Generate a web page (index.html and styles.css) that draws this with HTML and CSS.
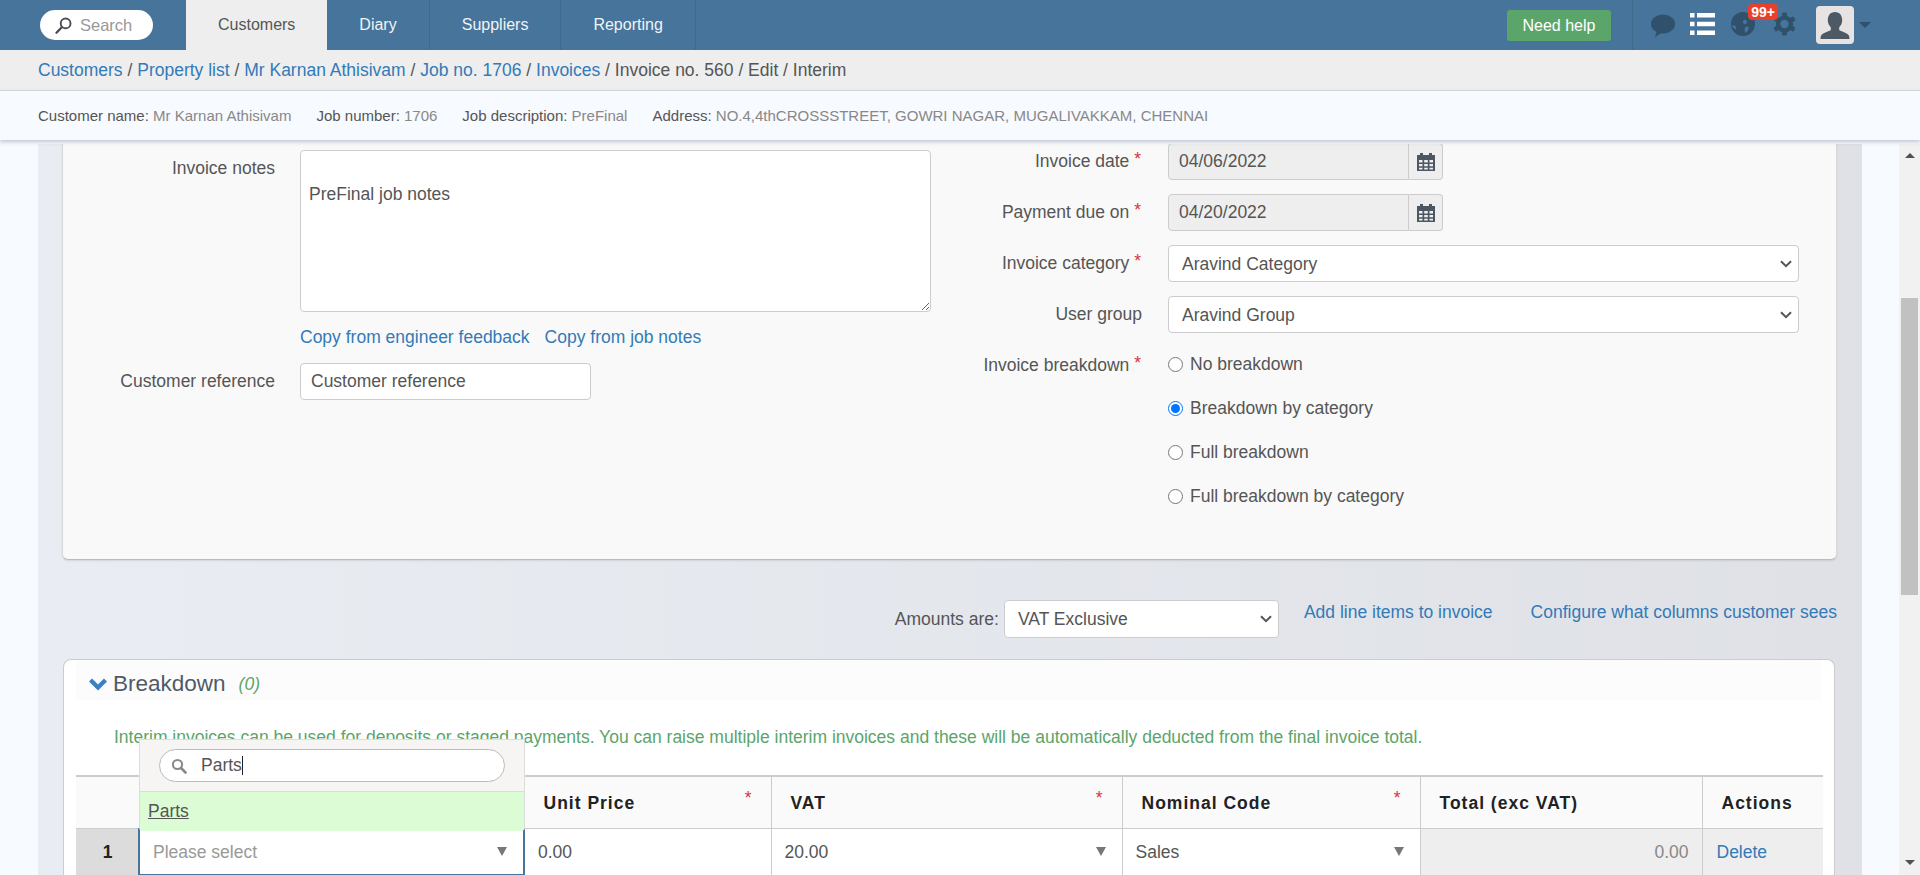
FILE: index.html
```html
<!DOCTYPE html>
<html lang="en">
<head>
  <meta charset="UTF-8">
  <meta name="viewport" content="width=device-width, initial-scale=1.0">
  <title>Edit Invoice</title>
  <link rel="stylesheet" href="styles.css">
</head>
<body>
  <header class="topbar">
    <div class="search-pill">
      <svg class="search-pill-icon" viewBox="0 0 16 16" width="17" height="17">
        <circle cx="10" cy="6" r="4.600" fill="none" stroke="#4a4f55" stroke-width="1.800"/>
        <path d="M6.600 9.400 1.400 14.800" stroke="#4a4f55" stroke-width="2.200" stroke-linecap="round"/>
      </svg>
      <span>Search</span>
    </div>
    <nav class="tabs">
      <a class="tab tab-active" href="#">Customers</a>
      <a class="tab" href="#">Diary</a>
      <a class="tab" href="#">Suppliers</a>
      <a class="tab" href="#">Reporting</a>
    </nav>
    <div class="topbar-right">
      <a class="help-btn" href="#">Need help</a>
      <span class="topbar-sep"></span>
      <svg class="icon-chat" viewBox="0 0 24 23" width="24" height="23">
        <ellipse cx="12" cy="10" rx="12" ry="9.600" fill="#2f516b"/>
        <path d="M6 16 4 23 12 18Z" fill="#2f516b"/>
      </svg>
      <svg class="icon-list" viewBox="0 0 25 22" width="25" height="22">
        <path fill="#fff" d="M0 0h4.500v4.500H0zM7 0h18v4.500H7zM0 8.800h4.500v4.500H0zM7 8.800h18v4.500H7zM0 17.500h4.500V22H0zM7 17.500h18V22H7z"/>
      </svg>
      <span class="globe-wrap">
        <svg viewBox="0 0 24 24" width="24" height="24">
          <circle cx="12" cy="12" r="12" fill="#2f516b"/>
          <path fill="#46749a" d="M12 8.500l2.500-1 1.500 1.500-.5 2.500-1.500 1-2-1.500zM14.500 14.500l3.500.5-1 3.500-2.500 2.500-1-3zM1 13l3 .5 1.500 2.500-1 1.500-2.500-2z"/>
        </svg>
        <span class="badge">99+</span>
      </span>
      <svg class="icon-gear" viewBox="0 0 24 24" width="23" height="24">
        <circle cx="12" cy="12" r="6.700" fill="none" stroke="#2f516b" stroke-width="4.600"/>
        <g fill="#2f516b">
          <rect x="9.500" y="0" width="5" height="5" rx="1"/>
          <rect x="9.500" y="19" width="5" height="5" rx="1"/>
          <rect x="9.500" y="0" width="5" height="5" rx="1" transform="rotate(60 12 12)"/>
          <rect x="9.500" y="19" width="5" height="5" rx="1" transform="rotate(60 12 12)"/>
          <rect x="9.500" y="0" width="5" height="5" rx="1" transform="rotate(120 12 12)"/>
          <rect x="9.500" y="19" width="5" height="5" rx="1" transform="rotate(120 12 12)"/>
        </g>
      </svg>
      <span class="avatar">
        <svg viewBox="0 0 38 38" width="38" height="38">
          <path fill="#4d5965" d="M19 6c-4.600 0-7.200 3.600-7.200 8 0 3 1.200 5.600 3 7.300v2.700c-1 1.300-8.600 2.800-9.800 5.800-.4 1-.5 2.200-.5 3.200h29c0-1-.1-2.200-.5-3.200-1.200-3-8.800-4.500-9.800-5.800v-2.700c1.800-1.700 3-4.300 3-7.300 0-4.400-2.600-8-7.200-8z"/>
        </svg>
      </span>
      <span class="caret"></span>
    </div>
  </header>

  <div class="breadcrumbs">
    <a href="#">Customers</a> / <a href="#">Property list</a> / <a href="#">Mr Karnan Athisivam</a> / <a href="#">Job no. 1706</a> / <a href="#">Invoices</a> / Invoice no. 560 / Edit / Interim
  </div>

  <div class="job-info">
    <span class="job-item">Customer name: <em>Mr Karnan Athisivam</em></span>
    <span class="job-item">Job number: <em>1706</em></span>
    <span class="job-item">Job description: <em>PreFinal</em></span>
    <span class="job-item">Address: <em>NO.4,4thCROSSSTREET, GOWRI NAGAR, MUGALIVAKKAM, CHENNAI</em></span>
  </div>

  <div class="workspace">
    <main class="panel">
      <section class="invoice-card">
        <div class="form-col form-col-left">
          <div class="form-row">
            <label class="form-label label-top">Invoice notes</label>
            <div>
              <textarea class="notes" spellcheck="false">

PreFinal job notes</textarea>
              <div class="copy-links">
                <a href="#">Copy from engineer feedback</a>
                <a href="#">Copy from job notes</a>
              </div>
            </div>
          </div>
          <div class="form-row">
            <label class="form-label">Customer reference</label>
            <input class="text-input ref-input" type="text" value="Customer reference">
          </div>
        </div>

        <div class="form-col form-col-right">
          <div class="form-row">
            <label class="form-label">Invoice date <span class="req">*</span></label>
            <div class="date-group">
              <input class="text-input date-input" type="text" value="04/06/2022" readonly>
              <span class="date-addon">
                <svg viewBox="0 0 18 18" width="18" height="18"><use href="#cal"/></svg>
              </span>
            </div>
          </div>
          <div class="form-row">
            <label class="form-label">Payment due on <span class="req">*</span></label>
            <div class="date-group">
              <input class="text-input date-input" type="text" value="04/20/2022" readonly>
              <span class="date-addon">
                <svg viewBox="0 0 18 18" width="18" height="18"><use href="#cal"/></svg>
              </span>
            </div>
          </div>
          <div class="form-row">
            <label class="form-label">Invoice category <span class="req">*</span></label>
            <select class="select-input wide"><option>Aravind Category</option></select>
          </div>
          <div class="form-row">
            <label class="form-label">User group</label>
            <select class="select-input wide"><option>Aravind Group</option></select>
          </div>
          <div class="form-row radio-row">
            <label class="form-label">Invoice breakdown <span class="req">*</span></label>
            <div class="radio-list">
              <label class="radio"><input type="radio" name="breakdown"> No breakdown</label>
              <label class="radio"><input type="radio" name="breakdown" checked> Breakdown by category</label>
              <label class="radio"><input type="radio" name="breakdown"> Full breakdown</label>
              <label class="radio"><input type="radio" name="breakdown"> Full breakdown by category</label>
            </div>
          </div>
        </div>
      </section>

      <div class="amounts-bar">
        <label class="amounts-label">Amounts are:</label>
        <select class="select-input amounts-select"><option>VAT Exclusive</option></select>
        <a class="amounts-link" href="#">Add line items to invoice</a>
        <a class="amounts-link" href="#">Configure what columns customer sees</a>
      </div>

      <section class="breakdown-card">
        <div class="breakdown-head">
          <svg viewBox="0 0 18 14" width="18" height="14">
            <path d="M1.500 3 9 10.500 16.500 3" fill="none" stroke="#3a80c4" stroke-width="4.400"/>
          </svg>
          <h2>Breakdown</h2>
          <span class="count">(0)</span>
        </div>
        <p class="interim-note">Interim invoices can be used for deposits or staged payments. You can raise multiple interim invoices and these will be automatically deducted from the final invoice total.</p>

        <table class="lines">
          <colgroup>
            <col class="col-num"><col class="col-item"><col class="col-price"><col class="col-vat"><col class="col-code"><col class="col-total"><col class="col-actions">
          </colgroup>
          <thead>
            <tr>
              <th></th>
              <th></th>
              <th>Unit Price<span class="th-req">*</span></th>
              <th>VAT<span class="th-req">*</span></th>
              <th>Nominal Code<span class="th-req">*</span></th>
              <th>Total (exc VAT)</th>
              <th>Actions</th>
            </tr>
          </thead>
          <tbody>
            <tr>
              <td class="cell-num">1</td>
              <td class="cell-item cell-selected">
                <span class="placeholder">Please select</span><span class="cell-arrow"></span>
                <div class="dropdown">
                  <div class="dropdown-search">
                    <div class="dropdown-field">
                      <svg viewBox="0 0 16 16" width="16" height="16">
                        <circle cx="6.500" cy="6.500" r="4.600" fill="none" stroke="#888" stroke-width="2"/>
                        <path d="M10 10l4.500 4.500" stroke="#888" stroke-width="2.600" stroke-linecap="round"/>
                      </svg>
                      <span>Parts</span><span class="text-cursor"></span>
                    </div>
                  </div>
                  <div class="dropdown-option"><a href="#">Parts</a></div>
                </div>
              </td>
              <td class="cell-text">0.00</td>
              <td class="cell-text cell-pick">20.00<span class="cell-arrow"></span></td>
              <td class="cell-text cell-pick">Sales<span class="cell-arrow"></span></td>
              <td class="cell-total">0.00</td>
              <td class="cell-action"><a href="#">Delete</a></td>
            </tr>
          </tbody>
        </table>
      </section>
    </main>

    <div class="scrollbar">
      <span class="scroll-up"></span>
      <span class="scroll-thumb"></span>
      <span class="scroll-down"></span>
    </div>
  </div>

  <svg class="svg-defs" width="0" height="0">
    <symbol id="cal" viewBox="0 0 18 18">
      <path fill="#4d5763" fill-rule="evenodd" d="M0 2h3V0h3v2h6V0h3v2h3v16H0zM2 7v2.500h3.500V7zm5.200 0v2.500h3.600V7zm5.300 0v2.500H16V7zM2 11v2.200h3.500V11zm5.200 0v2.200h3.600V11zm5.300 0v2.200H16V11zM2 14.700V16.500h3.500v-1.800zm5.200 0v1.800h3.600v-1.800zm5.300 0v1.800H16v-1.800z"/>
    </symbol>
  </svg>
</body>
</html>
```

FILE: styles.css
```css
* {
  box-sizing: border-box;
}

html, body {
  height: 100%;
}

body {
  margin: 0;
  height: 875px;
  overflow: hidden;
  display: flex;
  flex-direction: column;
  background-color: #f7faff;
  font-family: "Liberation Sans", Arial, sans-serif;
  font-size: 17.5px;
  color: #555;
}

a {
  color: #337ab7;
  text-decoration: none;
}

.svg-defs {
  position: absolute;
}

/* top bar */
.topbar {
  flex: none;
  height: 50px;
  display: flex;
  align-items: center;
  padding-left: 40px;
  background-color: #46749a;
  font-size: 16px;
}

.search-pill {
  width: 113px;
  height: 30px;
  display: flex;
  align-items: center;
  gap: 8px;
  padding-left: 15px;
  border-radius: 15px;
  background-color: #fff;
  color: #999;
  font-size: 16.5px;
}

.tabs {
  display: flex;
  height: 50px;
  margin-left: 33px;
}

.tab {
  display: flex;
  align-items: center;
  padding: 0 32px;
  border-right: 1px solid #3f6a8c;
  color: #fff;
  opacity: 0.92;
}

.tab-active {
  padding: 0 32px;
  border-right: none;
  background-color: #eee;
  color: #555;
  opacity: 1;
}

.topbar-right {
  margin-left: auto;
  height: 50px;
  display: flex;
  align-items: center;
  padding-right: 49px;
}

.help-btn {
  width: 104px;
  height: 31px;
  line-height: 31px;
  text-align: center;
  border-radius: 3px;
  background-color: #5ca56a;
  color: #fff;
}

.topbar-sep {
  width: 1px;
  height: 50px;
  margin-left: 21px;
  background-color: #3f6a8c;
}

.icon-chat {
  margin-left: 18px;
}

.icon-list {
  margin-left: 15px;
  margin-bottom: 2px;
}

.globe-wrap {
  position: relative;
  display: flex;
  margin-left: 16px;
  margin-bottom: 2px;
}

.badge {
  position: absolute;
  left: 17px;
  top: -8px;
  width: 30px;
  height: 16px;
  line-height: 16px;
  text-align: center;
  border-radius: 4px;
  background-color: #e8402a;
  color: #fff;
  font-size: 14px;
  font-weight: bold;
}

.icon-gear {
  margin-left: 18px;
  margin-bottom: 2px;
}

.avatar {
  display: flex;
  width: 38px;
  height: 38px;
  margin-left: 20px;
  border-radius: 4px;
  background-color: #e6e3e2;
}

.caret {
  width: 0;
  height: 0;
  margin-left: 5px;
  border-left: 6px solid transparent;
  border-right: 6px solid transparent;
  border-top: 6px solid #2f516b;
}

/* breadcrumb and job strip */
.breadcrumbs {
  flex: none;
  height: 41px;
  padding: 10px 0 0 38px;
  border-bottom: 1px solid #d5d8da;
  background-color: #eee;
  font-size: 17.5px;
  line-height: 20px;
}

.job-info {
  position: relative;
  z-index: 2;
  flex: none;
  height: 49px;
  display: flex;
  align-items: center;
  gap: 25px;
  padding-left: 38px;
  background-color: #f7faff;
  box-shadow: 0 2px 4px rgba(90, 100, 120, 0.35);
  font-size: 15px;
}

.job-item em {
  font-style: normal;
  color: #888;
}

/* scrolled area */
.workspace {
  flex: 1;
  min-height: 0;
  display: flex;
  margin-top: 4px;
  overflow: hidden;
}

.panel {
  width: 1824px;
  margin: 0 37px 0 38px;
  padding: 0 25px 0 24px;
  background: linear-gradient(90deg, #e9edf3, #dfe1e6);
}

.scrollbar {
  width: 21px;
  display: flex;
  flex-direction: column;
  align-items: center;
  background-color: #f1f1f1;
}

.scroll-up,
.scroll-down {
  width: 0;
  height: 0;
  border-left: 5px solid transparent;
  border-right: 5px solid transparent;
}

.scroll-up {
  margin-top: 9px;
  border-bottom: 5px solid #505050;
}

.scroll-down {
  margin-top: 265px;
  border-top: 5px solid #505050;
}

.scroll-thumb {
  width: 17px;
  height: 297px;
  margin-top: 140px;
  background-color: #c1c1c1;
}

/* invoice form card */
.invoice-card {
  height: 416px;
  display: flex;
  border: 1px solid #d9d9d9;
  border-top: none;
  border-bottom: 1px solid #bbb;
  border-radius: 0 0 6px 6px;
  background-color: #f9f9f9;
  box-shadow: 0 1px 2px rgba(0, 0, 0, 0.1);
}

.form-col-left {
  width: 868px;
  padding-top: 6px;
}

.form-col-right {
  margin-top: -1px;
  flex: 1;
  padding-left: 19px;
}

.form-row {
  display: flex;
  gap: 25px;
  align-items: center;
  margin-bottom: 14px;
}

.form-col-left .form-row {
  align-items: flex-start;
  margin-bottom: 17px;
}

.form-col-left .form-label {
  width: 212px;
  padding-right: 0;
  line-height: 37px;
}

.form-col-left .label-top {
  line-height: 36px;
}

.form-label {
  width: 193px;
  flex: none;
  padding-right: 1px;
  text-align: right;
}

.req {
  position: relative;
  top: -2px;
  margin-right: 1px;
  color: #d9333f;
}

.text-input,
.select-input,
.notes {
  border: 1px solid #ccc;
  border-radius: 4px;
  background-color: #fff;
  color: #555;
  font-family: inherit;
  font-size: 17.5px;
}

.notes {
  display: block;
  width: 631px;
  height: 162px;
  padding: 6px 8px;
  line-height: 25px;
}

.copy-links {
  display: flex;
  gap: 15px;
  margin-top: 16px;
  line-height: 18px;
}

.text-input {
  height: 37px;
  padding: 0 10px;
}

.ref-input {
  width: 291px;
}

.date-group {
  display: flex;
}

.date-input {
  width: 241px;
  background-color: #eee;
  border-radius: 4px 0 0 4px;
}

.date-addon {
  width: 34px;
  height: 37px;
  display: flex;
  align-items: center;
  justify-content: center;
  border: 1px solid #ccc;
  border-left: none;
  border-radius: 0 4px 4px 0;
  background-color: #eee;
}

.select-input {
  height: 37px;
  padding-left: 13px;
  appearance: none;
  background-image: url("data:image/svg+xml,%3Csvg xmlns='http://www.w3.org/2000/svg' width='12' height='8'%3E%3Cpath d='M1 1.200 6 6.200 11 1.200' fill='none' stroke='%23555' stroke-width='2'/%3E%3C/svg%3E");
  background-repeat: no-repeat;
  background-position: right 6px center;
}

.wide {
  width: 631px;
}

.radio-row {
  align-items: flex-start;
  margin-top: -5px;
}

.radio-row .form-label {
  line-height: 46px;
}

.radio-list {
  display: flex;
  flex-direction: column;
}

.radio {
  height: 44px;
  display: flex;
  align-items: center;
  gap: 7px;
}

.radio input {
  width: 15px;
  height: 15px;
  margin: 0;
}

/* amounts toolbar */
.amounts-bar {
  height: 38px;
  margin-top: 40px;
  display: flex;
  justify-content: flex-end;
  align-items: flex-start;
}

.amounts-label {
  line-height: 38px;
  margin-right: 5px;
}

.amounts-select {
  width: 275px;
  height: 38px;
  margin-right: 25px;
}

.amounts-link {
  line-height: 25px;
}

.amounts-link + .amounts-link {
  margin-left: 38px;
}

/* breakdown card */
.breakdown-card {
  margin-top: 21px;
  margin-left: 1px;
  margin-right: 2px;
  height: 260px;
  padding: 0 12px;
  border: 1px solid #ccc;
  border-bottom: none;
  border-radius: 8px 8px 0 0;
  background-color: #fff;
}

.breakdown-head {
  height: 40px;
  display: flex;
  align-items: center;
  padding: 8px 0 0 13px;
  background-color: #fcfcfc;
}

.breakdown-head h2 {
  margin: 0 0 0 6px;
  font-size: 22.5px;
  font-weight: normal;
  color: #505a66;
}

.count {
  margin-left: 13px;
  font-style: italic;
  color: #5ca56a;
}

.interim-note {
  margin: 0;
  height: 75px;
  padding: 27px 0 0 38px;
  line-height: 20px;
  color: #5ca56a;
}

/* line items table */
.lines {
  width: 1747px;
  border-collapse: collapse;
  table-layout: fixed;
  border-top: 2px solid #ccc;
}

.col-num { width: 63px; }
.col-item { width: 385px; }
.col-price { width: 247px; }
.col-vat { width: 351px; }
.col-code { width: 298px; }
.col-total { width: 282px; }
.col-actions { width: 121px; }

.lines th {
  position: relative;
  height: 52px;
  padding: 2px 0 0 19px;
  border: 1px solid #ccc;
  border-top: none;
  background-color: #fafafa;
  color: #222;
  font-size: 17.5px;
  letter-spacing: 1px;
  text-align: left;
}

.lines th:first-child {
  border-left: none;
}

.lines th:last-child {
  border-right: none;
}

.th-req {
  position: absolute;
  top: 11px;
  right: 19px;
  color: #d9333f;
  font-weight: normal;
  letter-spacing: 0;
}

.lines td {
  position: relative;
  height: 47px;
  padding: 2px 0 0 13px;
  border: 1px solid #ccc;
  border-top: none;
}

.lines .cell-num {
  border-left: none;
  background-color: #dcdcdc;
  color: #222;
  font-weight: bold;
  text-align: center;
  padding: 2px 0 0 1px;
}

.lines .cell-selected {
  border: 2px solid #46749a;
  border-top: none;
}

.placeholder {
  color: #999;
}

.cell-arrow {
  position: absolute;
  right: 16px;
  top: 18px;
  width: 0;
  height: 0;
  border-left: 5px solid transparent;
  border-right: 5px solid transparent;
  border-top: 9px solid #777;
}

.lines .cell-total {
  background-color: #eee;
  color: #888;
  text-align: right;
  padding-right: 13px;
}

.lines .cell-action {
  border-right: none;
  background-color: #eee;
  padding-left: 14px;
}

/* open dropdown over the item column */
.dropdown {
  position: absolute;
  left: -1px;
  right: -2px;
  bottom: 43px;
  height: 92px;
  border: 1px solid #ddd;
  border-bottom: none;
  background-color: #f6f5f4;
  border-radius: 0 0 4px 4px;
}

.dropdown-search {
  height: 52px;
  padding: 9px 19px 0;
  border-bottom: 1px solid #ddd;
}

.dropdown-field {
  height: 33px;
  display: flex;
  align-items: center;
  gap: 14px;
  padding-left: 11px;
  border: 1px solid #bbb;
  border-radius: 17px;
  background-color: #fff;
}

.text-cursor {
  width: 1px;
  height: 19px;
  margin-left: -14px;
  background-color: #222;
}

.dropdown-option {
  height: 39px;
  padding: 10px 8px 0;
  background-color: #dcfcd5;
  border-radius: 0 0 4px 4px;
  line-height: 18px;
}

.dropdown-option a {
  color: #555;
  text-decoration: underline;
}
```
